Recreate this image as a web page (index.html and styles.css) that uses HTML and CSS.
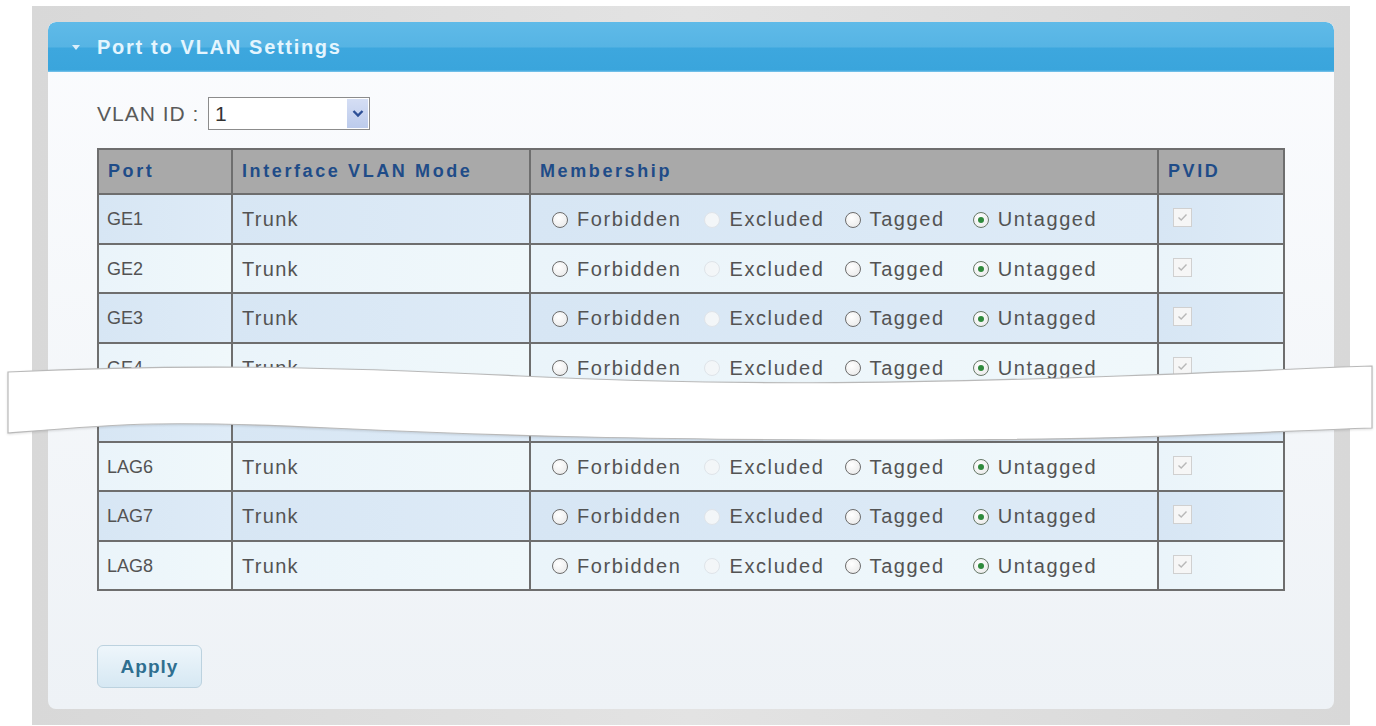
FILE: index.html
```html
<!DOCTYPE html>
<html lang="en">
<head>
    <meta charset="UTF-8">
    <meta name="viewport" content="width=device-width, initial-scale=1.0">
    <title>Port to VLAN Settings</title>
    <link rel="stylesheet" href="styles.css">
</head>
<body>
    <div class="frame">
        <div class="panel">
            <div class="panel-head">
                <span class="caret"></span>
                <span class="panel-title">Port to VLAN Settings</span>
            </div>
            <div class="panel-body">
                <div class="vlan-row">
                    <span class="vlan-label">VLAN ID :</span>
                    <div class="select">
                        <span class="select-value">1</span>
                        <span class="select-btn">
                            <svg width="12" height="9" viewBox="0 0 12 9"><path d="M1.5 2 L6 6.5 L10.5 2" fill="none" stroke="#2d4f96" stroke-width="2.4"/></svg>
                        </span>
                    </div>
                </div>

                <table class="grid">
                    <colgroup>
                        <col class="col-port">
                        <col class="col-mode">
                        <col class="col-member">
                        <col class="col-pvid">
                    </colgroup>
                    <thead>
                        <tr>
                            <th>Port</th>
                            <th>Interface VLAN Mode</th>
                            <th>Membership</th>
                            <th>PVID</th>
                        </tr>
                    </thead>
                    <tbody id="ports">
                        <!-- rows are filled in below -->
                    </tbody>
                </table>

                <button class="btn">Apply</button>
            </div>
        </div>
    </div>

    <!-- torn paper strip hiding the middle rows -->
    <svg class="tear" viewBox="0 0 1376 726" width="1376" height="726">
        <path d="M8 372 C 180 364, 320 366, 520 376 S 900 384, 1120 376 S 1300 368, 1372 366
                 L 1372 428 C 1250 432, 1150 440, 900 440 S 500 436, 330 428 S 120 424, 8 433 Z"
              fill="#fff" stroke="#b9b9b9" stroke-width="1.2"/>
    </svg>

    <script>
        const ports = ['GE1', 'GE2', 'GE3', 'GE4', 'LAG5', 'LAG6', 'LAG7', 'LAG8'];

        function createRow(name) {
            const row = document.createElement('tr');
            row.innerHTML = `
                <td class="cell-port">${name}</td>
                <td class="cell-mode">Trunk</td>
                <td class="cell-member">
                    <div class="member">
                        <span class="opt"><i class="radio"></i>Forbidden</span>
                        <span class="opt"><i class="radio off"></i>Excluded</span>
                        <span class="opt"><i class="radio"></i>Tagged</span>
                        <span class="opt"><i class="radio on"></i>Untagged</span>
                    </div>
                </td>
                <td class="cell-pvid">
                    <span class="check">
                        <svg width="11" height="9" viewBox="0 0 11 9"><path d="M1.5 4.5 L4.2 7 L9.5 1.5" fill="none" stroke="#b8b8b8" stroke-width="1.4"/></svg>
                    </span>
                </td>
            `;
            return row;
        }

        const body = document.getElementById('ports');
        ports.forEach(name => body.appendChild(createRow(name)));
    </script>
</body>
</html>
```

FILE: styles.css
```css
body {
    font-family: "Liberation Sans", Arial, sans-serif;
    background-color: #fff;
    margin: 0;
    color: #535353;
}

.frame {
    margin: 6px 26px 3px 32px;
    padding: 16px;
    background: linear-gradient(90deg, #d8d8d8, #e3e3e3 50%, #d8d8d8);
}

.panel {
    border-radius: 8px;
    overflow: hidden;
    background: linear-gradient(#fbfcfe, #eef2f6);
}

.panel-head {
    height: 50px;
    display: flex;
    align-items: center;
    padding-left: 24px;
    border-radius: 8px 8px 0 0;
    background: linear-gradient(#5fbae8, #56b4e4 50%, #3da7de 52%, #3aa5dc 96%, #7fc6ec);
}

.caret {
    width: 0;
    height: 0;
    border-left: 4px solid transparent;
    border-right: 4px solid transparent;
    border-top: 5px solid #d9eefa;
    margin-right: 17px;
    margin-top: 1px;
}

.panel-title {
    font-size: 20px;
    font-weight: bold;
    letter-spacing: 1.7px;
    color: #e4f5fe;
}

.panel-body {
    padding: 25px 51px 21px 49px;
}

.vlan-row {
    display: flex;
    align-items: center;
}

.vlan-label {
    font-size: 21px;
    letter-spacing: 1px;
    color: #5a5a5a;
    width: 111px;
}

.select {
    width: 160px;
    height: 31px;
    border: 1px solid #8c8c8c;
    background: #fff;
    display: flex;
    align-items: center;
    justify-content: space-between;
}

.select-value {
    font-size: 21px;
    color: #333;
    padding-left: 6px;
}

.select-btn {
    width: 21px;
    height: 29px;
    margin-right: 1px;
    display: flex;
    align-items: center;
    justify-content: center;
    background: linear-gradient(#d5def4, #bccbec);
}

.grid {
    margin-top: 18px;
    width: 1186px;
    table-layout: fixed;
    border-collapse: collapse;
    border: 2px solid #6e6e6e;
}

.col-port { width: 134px; }
.col-mode { width: 298px; }
.col-member { width: 628px; }
.col-pvid { width: 126px; }

.grid th,
.grid td {
    border: 2px solid #6e6e6e;
    text-align: left;
    padding: 0 9px;
    white-space: nowrap;
}

.grid th {
    height: 43px;
    background: #a9a9a9;
    color: #1f4c88;
    font-size: 18px;
    letter-spacing: 2.6px;
    font-weight: bold;
}

.grid tbody tr {
    height: 49.5px;
}

.grid tbody tr:nth-child(odd) td {
    background: linear-gradient(90deg, #d7e6f4, #deebf7);
}

.grid tbody tr:nth-child(even) td {
    background: linear-gradient(90deg, #eaf4fa, #f0f8fb);
}

.grid td {
    font-size: 20px;
    letter-spacing: 1.3px;
    padding-top: 2px;
}

.grid td.cell-port {
    font-size: 18px;
    letter-spacing: 0;
    padding-left: 8px;
}

.grid td.cell-member {
    padding-left: 21px;
    letter-spacing: 1.6px;
}

.grid td.cell-pvid {
    padding-left: 14px;
}

.member {
    display: flex;
    align-items: center;
}

.opt {
    display: inline-flex;
    align-items: center;
    gap: 9px;
}

.opt:nth-child(2) { margin-left: 23px; }
.opt:nth-child(3) { margin-left: 20px; }
.opt:nth-child(4) { margin-left: 28px; }

.radio {
    width: 14px;
    height: 14px;
    border-radius: 50%;
    border: 1.5px solid #6c6c6c;
    background: radial-gradient(circle at 40% 35%, #fff, #e6e6e6);
    display: inline-block;
    position: relative;
}

.radio.off {
    border-color: #dfe4e9;
    background: #f3f6f8;
}

.radio.on {
    border-color: #677867;
}

.radio.on::after {
    content: "";
    position: absolute;
    left: 4px;
    top: 4px;
    width: 6px;
    height: 6px;
    border-radius: 50%;
    background: #2f8a3c;
}

.check {
    width: 17px;
    height: 17px;
    border: 1px solid #d0d0d0;
    background: #f6f6f6;
    display: flex;
    align-items: center;
    justify-content: center;
    margin-top: -4px;
}

.btn {
    margin-top: 54px;
    width: 105px;
    height: 43px;
    border: 1px solid #bcd2df;
    border-radius: 6px;
    background: linear-gradient(#eef6fb, #d6e8f3);
    color: #2f6f90;
    font-family: "Liberation Sans", Arial, sans-serif;
    font-size: 19px;
    font-weight: bold;
    letter-spacing: 1px;
    display: block;
}

.tear {
    position: absolute;
    left: 0;
    top: 0;
    pointer-events: none;
    filter: drop-shadow(0 1px 1px rgba(0, 0, 0, 0.12));
}
```
